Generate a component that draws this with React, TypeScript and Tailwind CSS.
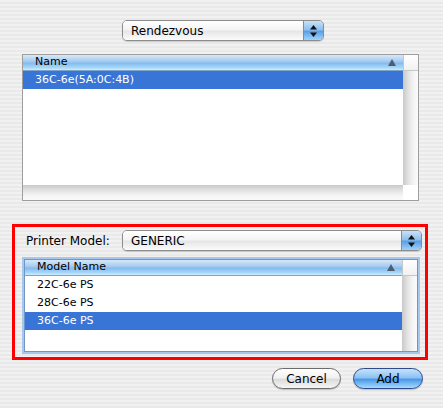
import React from "react";

const font = { fontFamily: '"DejaVu Sans", "Liberation Sans", sans-serif' };

function SortArrow() {
  return (
    <svg width="8" height="7" viewBox="0 0 8 7" className="block">
      <polygon points="4,0 8,7 0,7" fill="#4d5d72" />
    </svg>
  );
}

function UpDown() {
  return (
    <svg width="7" height="12" viewBox="0 0 7 12" className="block">
      <polygon points="3.5,0 7,4.5 0,4.5" fill="#111" />
      <polygon points="0,7.5 7,7.5 3.5,12" fill="#111" />
    </svg>
  );
}

function Popup({ label, className }: { label: string; className: string }) {
  return (
    <div
      className={`flex h-[21px] rounded-[5px] border border-[#8c8c8c] overflow-hidden shadow-[0_1px_1px_rgba(0,0,0,0.15)] ${className}`}
    >
      <div className="flex-1 flex items-center pl-[8px] text-[12px] text-black bg-[linear-gradient(to_bottom,#ffffff_0%,#f4f4f4_45%,#e6e6e6_55%,#fbfbfb_100%)]">
        {label}
      </div>
      <div className="w-[20px] flex items-center justify-center border-l border-[#6e8fbd] bg-[linear-gradient(to_bottom,#c9e1f8_0%,#8fbfef_45%,#5c9fe6_55%,#9fd3fb_100%)]">
        <UpDown />
      </div>
    </div>
  );
}

function ListBox({
  header,
  rows,
  selected,
  hscroll,
  className,
}: {
  header: string;
  rows: string[];
  selected: number;
  hscroll: boolean;
  className: string;
}) {
  return (
    <div className={`flex flex-col bg-white ${className}`}>
      <div className="flex h-[16px]">
        <div className="flex-1 flex items-center justify-between pl-[12px] pr-[7px] text-[11px] text-black border-b border-[#7fa3c8] bg-[linear-gradient(to_bottom,#d6e8f8_0%,#a9cdf1_40%,#86bbee_55%,#a8d8fa_85%,#cdeeff_100%)]">
          <span>{header}</span>
          <SortArrow />
        </div>
        <div className="w-[15px] border-l border-b border-[#c6c6c6] bg-[linear-gradient(to_bottom,#ffffff,#f1f1f1)]" />
      </div>
      <div className="flex flex-1 min-h-0">
        <div className="flex-1 flex flex-col">
          {rows.map((r, i) => (
            <div
              key={r}
              className={`h-[18px] flex items-center pl-[12px] text-[11px] ${
                i === selected ? "bg-[#3875d7] text-white" : "text-black"
              }`}
            >
              {r}
            </div>
          ))}
        </div>
        <div className="w-[15px] bg-[linear-gradient(to_right,#c9c9c9_0%,#e2e2e2_35%,#f4f4f4_70%,#fbfbfb_100%)]" />
      </div>
      {hscroll && (
        <div className="flex h-[15px]">
          <div className="flex-1 bg-[linear-gradient(to_bottom,#c9c9c9_0%,#e2e2e2_35%,#f4f4f4_70%,#fbfbfb_100%)]" />
          <div className="w-[15px] bg-white" />
        </div>
      )}
    </div>
  );
}

export default function App() {
  return (
    <div
      style={font}
      className="w-[443px] h-[408px] flex flex-col bg-[repeating-linear-gradient(to_bottom,#f1f1f1_0px,#f1f1f1_2px,#e9e9e9_2px,#e9e9e9_4px)]"
    >
      <div className="pt-[20px] pl-[122px]">
        <Popup label="Rendezvous" className="w-[202px]" />
      </div>

      <ListBox
        header="Name"
        rows={["36C-6e(5A:0C:4B)"]}
        selected={0}
        hscroll={true}
        className="mt-[13px] ml-[22px] w-[397px] h-[147px] border border-[#9e9e9e]"
      />

      <div className="mt-[23px] ml-[12px] w-[416px] h-[136px] border-[3px] border-[#ff0000] flex flex-col">
        <div className="flex items-center pt-[3px] pl-[11px] pr-[3px]">
          <span className="text-[12px] text-black">Printer Model:</span>
          <Popup label="GENERIC" className="ml-auto w-[300px]" />
        </div>
        <ListBox
          header="Model Name"
          rows={["22C-6e PS", "28C-6e PS", "36C-6e PS"]}
          selected={2}
          hscroll={false}
          className="mt-[8px] ml-[9px] w-[394px] h-[93px] border border-[#6f95c9] shadow-[0_0_0_2px_#a9c7ec]"
        />
      </div>

      <div className="mt-[8px] flex justify-end gap-[12px] pr-[20px]">
        <button className="w-[69px] h-[21px] rounded-full border border-[#6b6b6b] text-[12px] text-black flex items-center justify-center bg-[linear-gradient(to_bottom,#ffffff_0%,#f2f2f2_45%,#dcdcdc_55%,#f6f6f6_100%)] shadow-[0_1px_1px_rgba(0,0,0,0.2)]">
          Cancel
        </button>
        <button className="w-[70px] h-[21px] rounded-full border border-[#2c4a8c] text-[12px] text-black flex items-center justify-center bg-[linear-gradient(to_bottom,#c6e2fb_0%,#8cc3f4_45%,#4b98e8_55%,#a5dbfd_100%)] shadow-[0_1px_1px_rgba(0,0,0,0.2)]">
          Add
        </button>
      </div>
    </div>
  );
}
